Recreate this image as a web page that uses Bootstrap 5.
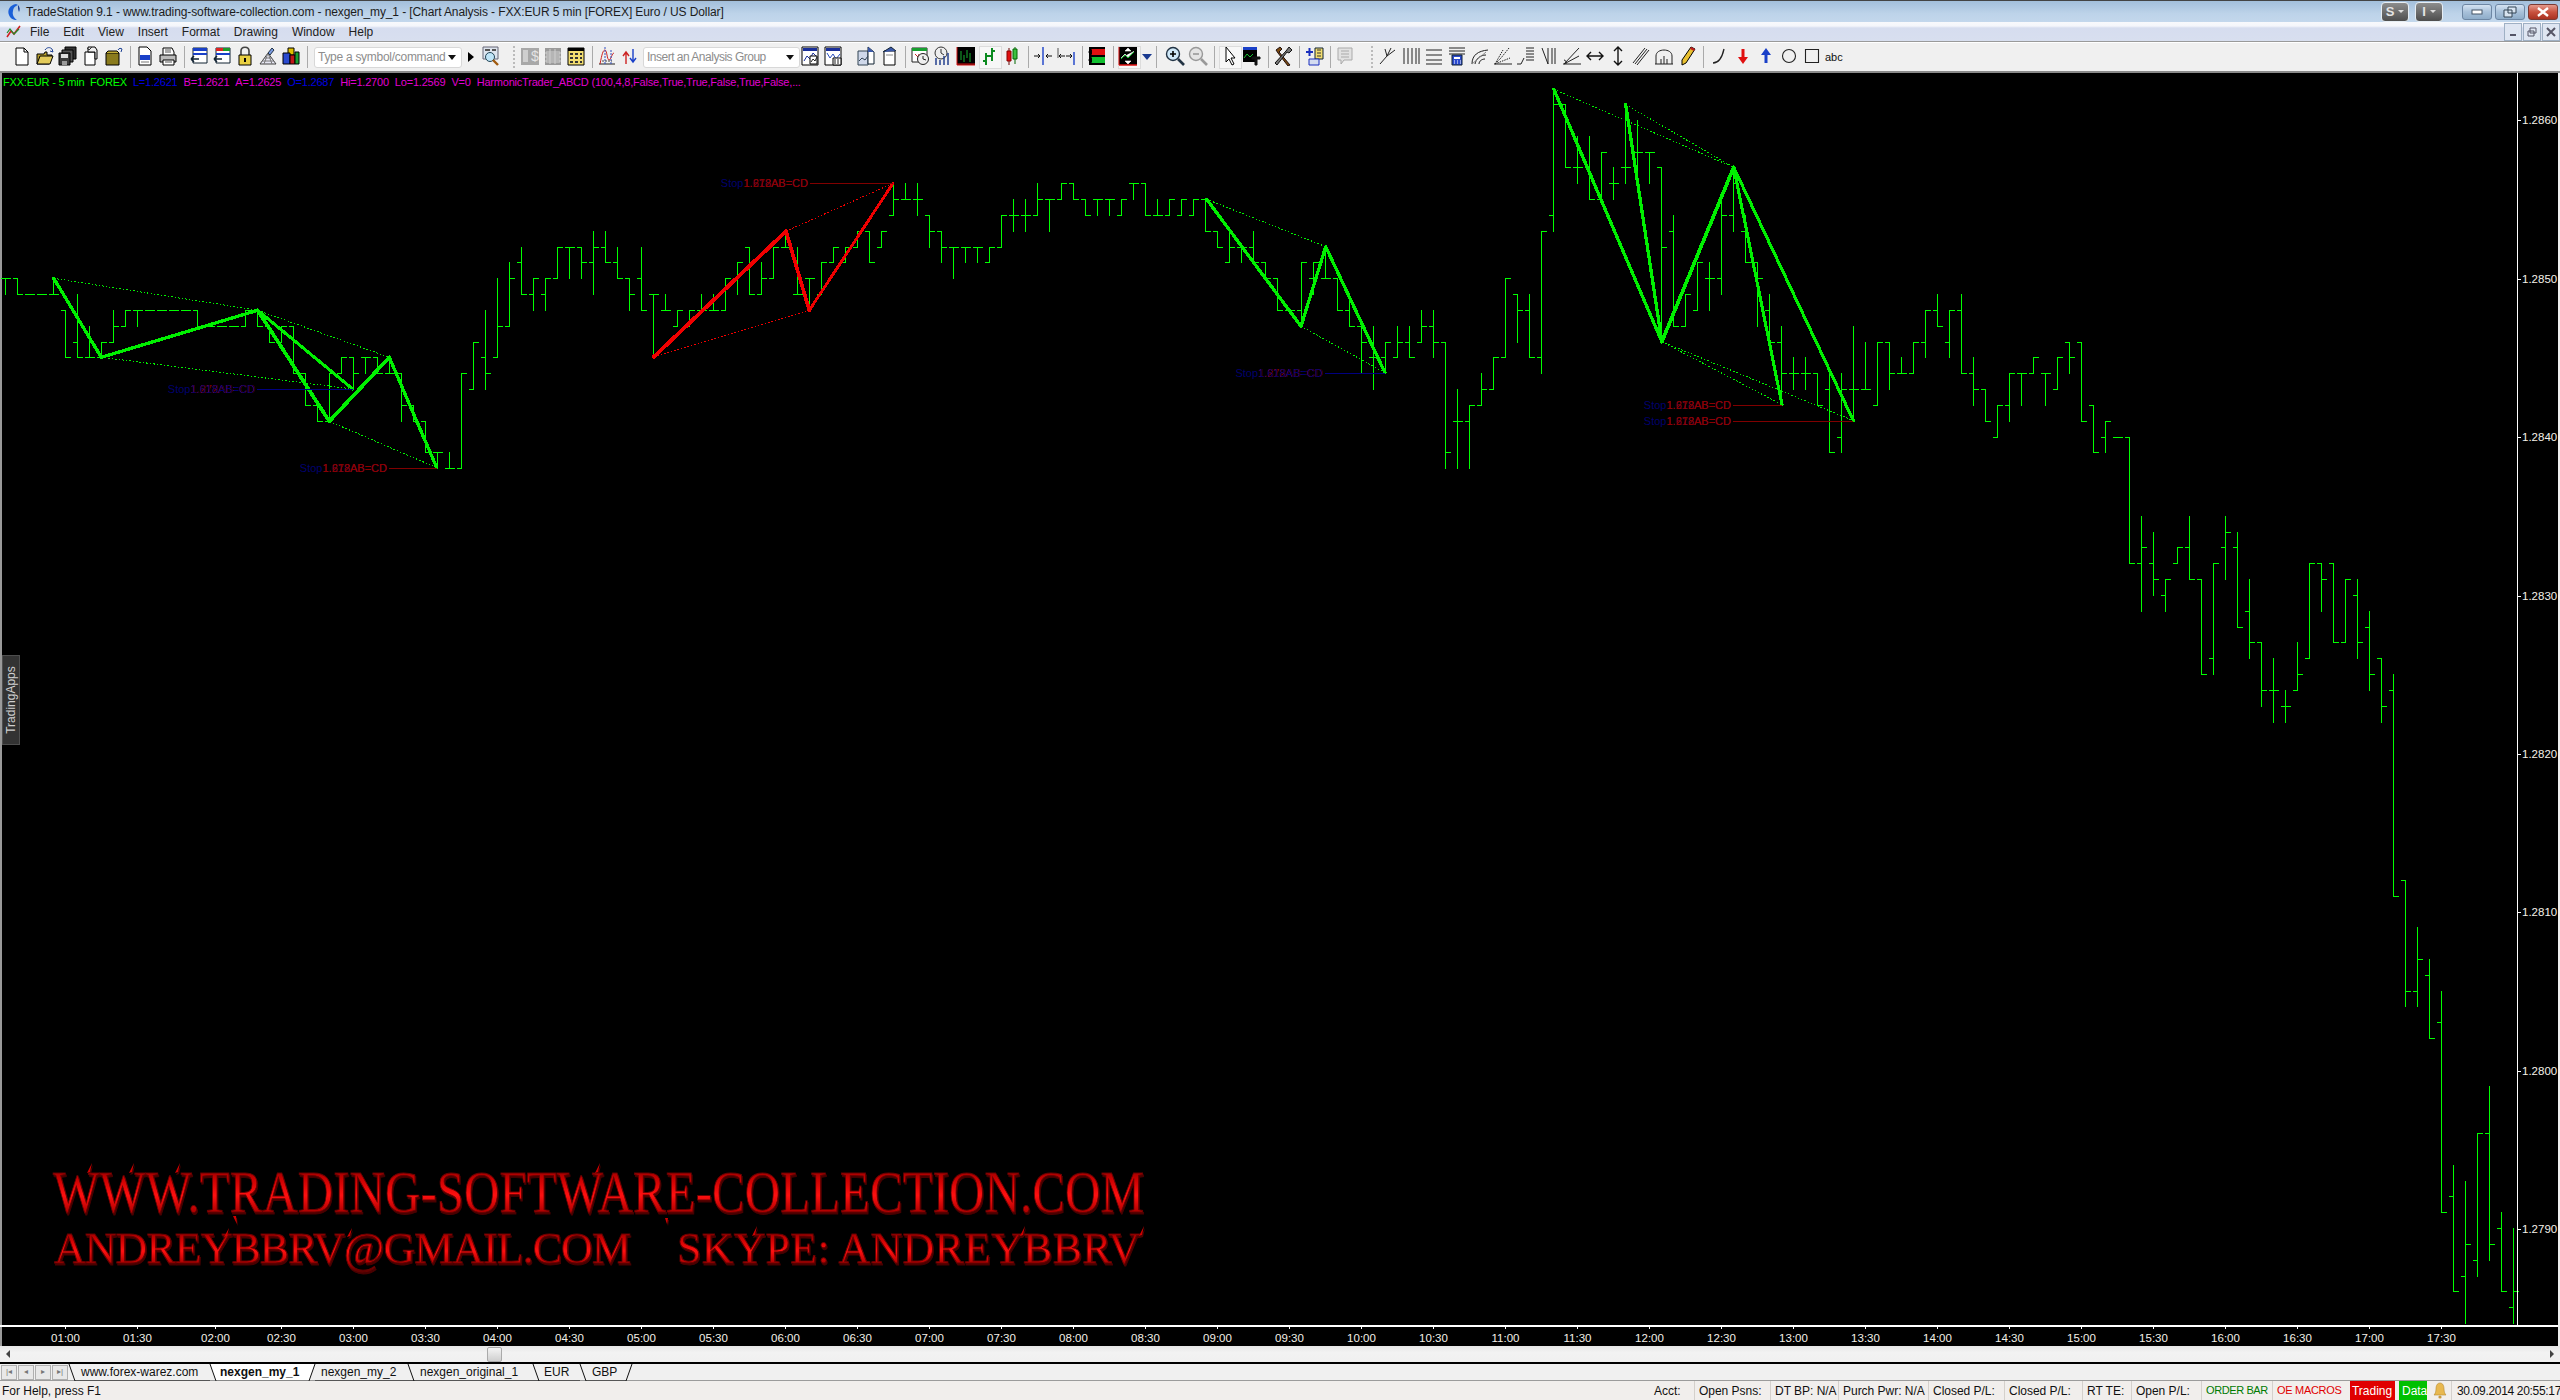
<!DOCTYPE html>
<html lang="en">
<head>
<meta charset="utf-8">
<title>TradeStation 9.1 Chart Analysis</title>
<link href="https://cdn.jsdelivr.net/npm/bootstrap@5.3.0/dist/css/bootstrap.min.css" rel="stylesheet">
<style>
html,body{height:100%;margin:0;overflow:hidden}
body{font-family:"Liberation Sans",Arial,sans-serif;font-size:12px;line-height:1;background:#000;color:#111}
.app-shell{width:2560px;height:1400px}
.title-row{height:22px;background:linear-gradient(#a3bfdb,#bdd3e9 60%,#c3d7ec);border-top:1px solid #444;padding-left:7px;gap:5px}
.title-text{color:#1c1c1c;font-size:12px;letter-spacing:-.1px}
.caption-btn{width:30px;height:16px;border:1px solid #6d86a3;border-radius:3px;background:linear-gradient(#d4e2f1,#a8c1da 50%,#8fadc9);margin-left:3px}
.caption-close{background:linear-gradient(#e49a8c,#c9523f 50%,#a93222);border-color:#7b3a33}
.caption-extra{width:28px;height:20px;border:1px solid #e6edf3;border-radius:4px;background:linear-gradient(#8d8d8d,#4e4e4e);color:#e4e4e4;font-weight:700;font-size:13px;margin-right:6px;gap:4px}
.tiny-caret{border-left:3px solid transparent;border-right:3px solid transparent;border-top:3px solid #ddd}
.cap-right{padding-right:2px}
.menu-row{height:20px;background:linear-gradient(#f8f9fc 0,#f4f6fb 4px,#d6ddef 6px,#d8dfef 100%);border-bottom:1px solid #9a9a9a;padding-left:6px;gap:14px;font-size:12px;color:#222}
.mdi-btn{width:18px;height:18px;border:1px solid #9fb0c4;background:#dfe6f2;margin-left:1px}
.tool-row{height:31px;background:#f0f0f0;border-top:1px solid #fff;border-bottom:2px solid #8b8b8b;padding-left:12px}
.tb{width:23px;height:23px;flex:none}
.tb svg{display:block;width:20px;height:20px}
.tb-on{background:#f7f7f7;box-shadow:inset 0 0 0 1px #dcdcdc}
.tb-text{font-size:11px}
.tb-sep{width:8px;height:22px;flex:none;position:relative}
.tb-sep::after{content:"";position:absolute;left:3px;top:0;bottom:0;border-left:1px solid #aaa}
.tb-grip{flex:none;height:22px;border-left:2px dotted #bbb}
.grip-a{width:0;margin:0 5px 0 9px}
.grip-b{width:0;margin:0 5px 0 13px}
.sep-wide{width:10px}
.sep-zoom{width:12px}
.gap-doc{margin-left:10px}
.combo{height:21px;border:1px solid #d8d8d8;border-radius:3px;background:#fff;color:#8d8d8d;font-size:12px;padding:0 5px 0 3px;flex:none;white-space:nowrap}
.combo-a{width:148px;margin-right:3px;letter-spacing:-.28px}
.combo-b{width:157px;letter-spacing:-.5px}
.combo i{border-left:4px solid transparent;border-right:4px solid transparent;border-top:5px solid #111}
.chart-box{flex:1 1 auto;background:#000;overflow:hidden}
.chart-svg{display:block;width:2560px;height:1273px}
.legend-line{left:3px;top:4px;font-size:11px;white-space:pre;letter-spacing:-.2px}
.lg-g{color:#0f0}.lg-b{color:#0000e0;margin-left:6px}.lg-m{color:#e000d0;margin-left:6px}
.side-tab{left:2px;top:582px;width:18px;height:90px;background:#333;border:1px solid #4e4e4e;color:#cfcfcf}
.side-tab span{display:block;transform:rotate(-90deg);white-space:nowrap;font-size:12px}
.wm-group{filter:drop-shadow(1.5px 2px 0 #4a0000)}
.scroll-row{height:17px;background:linear-gradient(#e6e6e6,#f2f2f2 40%,#f0f0f0);border-bottom:1px solid #000;padding:0 6px}
.scroll-thumb{width:15px;height:15px;margin-left:477px;border:1px solid #aaa;border-radius:2px;background:linear-gradient(#f4f4f4,#cfcfcf)}
.arr-l{border-top:4px solid transparent;border-bottom:4px solid transparent;border-right:4px solid #444}
.arr-r{border-top:4px solid transparent;border-bottom:4px solid transparent;border-left:4px solid #444;margin-left:auto}
.tabs-row{height:18px;background:#f0f0f0;border-top:1px solid #000;border-bottom:1px solid #9b9b9b;font-size:12px}
.tabs-art{left:0;top:0;width:700px;height:17px}
.nav-box{width:16px;height:15px;border:1px solid #b0b0b0;background:#e8e8e8;margin-left:1px;color:#777;font-size:8px;flex:none}
.tab-name{z-index:1;flex:none}
.tn1{margin-left:13px;width:139px}
.tn2{width:101px;font-weight:700}
.tn3{width:99px}
.tn4{width:124px}
.tn5{width:48px}
.status-row{height:19px;background:#f1eeec;font-size:12px;padding-left:2px;color:#111;letter-spacing:-.02px}
.stat{height:19px;flex:none;white-space:nowrap;border-left:1px solid #d4d0cc;padding-left:4px}
.s-a{margin-left:auto;border:0;padding:0;width:40px}
.s-b{width:76px}.s-c{width:68px}.s-d{width:90px}.s-e{width:76px}.s-f{width:78px}.s-g{width:49px}.s-h{width:70px}.s-i{width:71px}.s-j{width:75px}
.s-trade{background:#e00000;color:#fff;width:45px;margin-left:3px;border:0;padding-left:2px}
.s-data{background:#00c000;color:#fff;width:28px;margin-left:4px;border:0;padding-left:3px}
.s-bell{width:24px;border:0;padding-left:6px}
.s-time{width:109px;padding-left:5px;letter-spacing:-.32px}
.txt-green{color:#007a00;font-size:11px;letter-spacing:-.4px}
.txt-red{color:#e00000;font-size:11px;letter-spacing:-.3px}
</style>
</head>
<body>
<svg width="0" height="0" class="position-absolute">
<defs>
<symbol id="i-new" viewBox="0 0 20 20"><path d="M4 2h8l4 4v13H4z" fill="#fff" stroke="#000"/><path d="M12 2v4h4" fill="none" stroke="#000"/></symbol>
<symbol id="i-open" viewBox="0 0 20 20"><path d="M2 8h7l1-2h2v3h5l-3 9H2z" fill="#b8a02c" stroke="#000"/><path d="M5 10h13l-3 8H2z" fill="#e3cb5a" stroke="#000"/><path d="M10 4c2-3 5-3 7-1l1 3-3-1" fill="none" stroke="#1a3f94"/></symbol>
<symbol id="i-saveall" viewBox="0 0 20 20"><path d="M7 1h11v12H7z" fill="#333" stroke="#000"/><path d="M4 4h11v12H4z" fill="#555" stroke="#000"/><path d="M1 7h11v12H1z" fill="#3c3c3c" stroke="#000"/><path d="M3 8h7v4H3z" fill="#ddd"/><path d="M4 15h5v4H4z" fill="#9a9a9a"/></symbol>
<symbol id="i-clip" viewBox="0 0 20 20"><path d="M4 6h10v13H4z" fill="#fff" stroke="#000"/><path d="M7 1h7l2 3v9h-2V6H7z" fill="#eee" stroke="#000"/><path d="M6 2l2 2 3-3" fill="none" stroke="#333"/></symbol>
<symbol id="i-box" viewBox="0 0 20 20"><path d="M2 7h13v12H2z" fill="#8a7b1d" stroke="#000"/><path d="M2 7l2-2h9l2 2" fill="#c0ab35" stroke="#000"/><path d="M14 4c1-2 3-2 4-1l-1 3" fill="none" stroke="#1a3f94"/></symbol>
<symbol id="i-pgblue" viewBox="0 0 20 20"><path d="M4 1h8l4 4v14H4z" fill="#fff" stroke="#000"/><path d="M5 9h10v5H5z" fill="#1a40c8"/><path d="M6 15h8v2H6z" fill="#bbb"/></symbol>
<symbol id="i-print" viewBox="0 0 20 20"><path d="M5 2h9l2 4v4H5z" fill="#fff" stroke="#000"/><path d="M2 9h16v7H2z" fill="#bbb" stroke="#000"/><path d="M5 14h11v5H5z" fill="#fff" stroke="#000"/><path d="M7 4h6M7 6h6M7 16h7" stroke="#555"/></symbol>
<symbol id="i-winb" viewBox="0 0 20 20"><path d="M4 2h14v15H4z" fill="#fff" stroke="#123"/><path d="M4 2h14v3H4zM4 7h14v2H4z" fill="#1a40c8"/><path d="M10 13H2m0 0l3-3m-3 3l3 3" stroke="#123" fill="none" stroke-width="1.5"/></symbol>
<symbol id="i-wing" viewBox="0 0 20 20"><path d="M4 2h14v15H4z" fill="#fff" stroke="#123"/><path d="M4 2h7v3H4z" fill="#d22"/><path d="M11 2h7v3h-7z" fill="#1a9a2a"/><path d="M4 7h14v2H4z" fill="#1a40c8"/><path d="M10 13H2m0 0l3-3m-3 3l3 3" stroke="#123" fill="none" stroke-width="1.5"/></symbol>
<symbol id="i-lock" viewBox="0 0 20 20"><path d="M6 9V5c0-5 8-5 8 0v4" fill="none" stroke="#444" stroke-width="1.6"/><path d="M4 9h12v10H4z" fill="#e8cf42" stroke="#000"/><path d="M9 12h2v4H9z" fill="#000"/></symbol>
<symbol id="i-pyr" viewBox="0 0 20 20"><path d="M2 18L10 7l8 11z" fill="#e8e8f4" stroke="#444"/><path d="M6 18l4-11 4 11M4 15h12M6 12h8" stroke="#777" fill="none"/><path d="M10 7l4-5 2 2-4 5z" fill="#7a9ae0" stroke="#234"/></symbol>
<symbol id="i-blocks" viewBox="0 0 20 20"><path d="M7 2h6v7H7z" fill="#e0c000" stroke="#000"/><path d="M2 7h7v11H2z" fill="#2a4ad0" stroke="#000"/><path d="M9 9h5v9H9z" fill="#c01818" stroke="#000"/><path d="M14 6h4v12h-4z" fill="#18a030" stroke="#000"/></symbol>
<symbol id="i-search" viewBox="0 0 20 20"><path d="M2 1h15v12H2z" fill="#dde4ee" stroke="#667"/><path d="M4 3h5v2H4zM11 3h4v2h-4z" fill="#555"/><circle cx="9" cy="11" r="4.5" fill="#bfe4f7" stroke="#245"/><path d="M12 14l5 5" stroke="#a05a10" stroke-width="2.4"/></symbol>
<symbol id="i-gdollar" viewBox="0 0 20 20"><path d="M1 2h18v17H1z" fill="#a8a8a8"/><path d="M3 4h5v12H3z" fill="#cfcfcf"/><text x="11" y="15" font-size="14" fill="#e4e4e4" font-family="Liberation Sans">$</text></symbol>
<symbol id="i-gtable" viewBox="0 0 20 20"><path d="M2 2h16v17H2z" fill="#9a9a9a"/><path d="M3 6h14v2H3zM3 10h14v2H3zM3 14h14v2H3zM7 3v15M12 3v15" stroke="#d0d0d0" fill="none"/></symbol>
<symbol id="i-calc" viewBox="0 0 20 20"><path d="M2 2h16v17H2z" fill="#f2dd70" stroke="#000"/><path d="M2 2h16v3H2z" fill="#000"/><path d="M4 7h3v2H4zM9 7h3v2H9zM14 7h2v2h-2zM4 11h3v2H4zM9 11h3v2H9zM14 11h2v2h-2zM4 15h3v2H4zM9 15h3v2H9zM14 15h2v2h-2z" fill="#333"/></symbol>
<symbol id="i-signal" viewBox="0 0 20 20"><path d="M2 18h16" stroke="#222"/><path d="M3 18c2-10 3-14 5-14s2 10 4 10 3-7 5-7" fill="none" stroke="#c22"/><path d="M8 1v17M14 4v14" stroke="#3050c0" stroke-dasharray="2 1"/><path d="M5 15h10" stroke="#444" stroke-dasharray="2 1"/></symbol>
<symbol id="i-updown" viewBox="0 0 20 20"><path d="M6 18V7m-3 3l3-4 3 4" stroke="#c22" fill="none" stroke-width="1.4"/><path d="M13 3v12m-3-3l3 4 3-4" stroke="#1a40c8" fill="none" stroke-width="1.4"/></symbol>
<symbol id="i-winchart" viewBox="0 0 20 20"><path d="M2 1h16v18H2z" fill="#fff" stroke="#000"/><path d="M3 2h14v3H3z" fill="#1a2f9a"/><path d="M4 15l3-5 3 3 3-6 4 4" stroke="#1a2f9a" fill="none"/><path d="M10 10h7v8h-7z" fill="#fff" stroke="#000"/><path d="M11 16l2-3 2 2 2-4" stroke="#222" fill="none"/></symbol>
<symbol id="i-wingrid" viewBox="0 0 20 20"><path d="M2 1h16v18H2z" fill="#fff" stroke="#000"/><path d="M3 2h14v3H3z" fill="#1a2f9a"/><path d="M4 7l3 5 3-4 3 5 4-5" stroke="#2a50c0" fill="none"/><path d="M10 12h8v7h-8z" fill="#fff" stroke="#000"/><path d="M12 13v5M15 13v5" stroke="#222"/></symbol>
<symbol id="i-docup" viewBox="0 0 20 20"><path d="M5 5h11v14H5z" fill="#fff" stroke="#000"/><path d="M4 6L12 1l5 4" fill="#3a58a8" stroke="#123"/><path d="M7 9h7" stroke="#888"/></symbol>
<symbol id="i-docwin" viewBox="0 0 20 20"><path d="M2 5h10v14H2z" fill="#cfd8ea" stroke="#345"/><path d="M12 1l6 5v12h-6z" fill="#fff" stroke="#123"/><path d="M3 15l3-3 3 2 3-4" stroke="#345" fill="none"/><path d="M12 1l6 5h-6z" fill="#3a58a8"/></symbol>
<symbol id="i-calclock" viewBox="0 0 20 20"><path d="M2 2h15v14H2z" fill="#fff" stroke="#222"/><path d="M2 2h15v3H2z" fill="#18a030"/><path d="M5 8l3 3 1-3" stroke="#c22" fill="none"/><circle cx="13" cy="13" r="5.5" fill="#eee" stroke="#222"/><path d="M13 10v3l3 1" stroke="#222" fill="none"/></symbol>
<symbol id="i-clockbars" viewBox="0 0 20 20"><circle cx="8" cy="7" r="6" fill="#eee" stroke="#333"/><path d="M8 3v4l3 2" stroke="#333" fill="none"/><path d="M3 12v7M7 14v5M11 10v9M15 7v12" stroke="#25408f" stroke-width="1.5"/></symbol>
<symbol id="i-darkchart" viewBox="0 0 20 20"><path d="M1 1h18v18H1z" fill="#000"/><path d="M1 18h18M1 1v18h18" stroke="#d01010" fill="none"/><path d="M5 5v9M8 9v7M11 4v8M14 7v9" stroke="#18b030"/></symbol>
<symbol id="i-ohlc" viewBox="0 0 20 20"><path d="M7 7v12M4 15h3M7 10h3M13 2v13M10 10h3M13 5h3" stroke="#0b8a1f" stroke-width="2"/></symbol>
<symbol id="i-candles" viewBox="0 0 20 20"><path d="M7 2v17" stroke="#600"/><path d="M5 5h4v10H5z" fill="#e01010" stroke="#800"/><path d="M13 1v17" stroke="#060"/><path d="M11 3h4v10h-4z" fill="#3cc040" stroke="#060"/></symbol>
<symbol id="i-barin" viewBox="0 0 20 20"><path d="M10 1v18" stroke="#1a40c8" stroke-width="1.4"/><path d="M1 10h6m-2-2l2 2-2 2M19 10h-6m2-2l-2 2 2 2" stroke="#111" fill="none"/></symbol>
<symbol id="i-barout" viewBox="0 0 20 20"><path d="M2 2v10" stroke="#555"/><path d="M18 6v13" stroke="#1a40c8" stroke-width="1.4"/><path d="M9 10H3m2-2l-2 2 2 2M10 10h6m-2-2l2 2-2 2" stroke="#111" fill="none"/></symbol>
<symbol id="i-panel" viewBox="0 0 20 20"><path d="M2 1h16v18H2z" fill="#000"/><path d="M4 3h14v6H4z" fill="#e01010"/><path d="M4 11h14v6H4z" fill="#10c030"/><path d="M1 6l4-3v6zM1 14l4-3v6z" fill="#000"/></symbol>
<symbol id="i-pressed" viewBox="0 0 20 20"><path d="M1 1h18v18H1z" fill="#000"/><path d="M1 19h18M1 1v18h18" stroke="#e01010" fill="none"/><path d="M10 2l3 3h-6zM10 18l3-3h-6zM3 12l4-4 3 3 6-6" fill="#fff" stroke="#fff" stroke-width=".6"/><path d="M3 13l4-4 3 3 6-6" stroke="#18c030" fill="none"/></symbol>
<symbol id="i-zin" viewBox="0 0 20 20"><circle cx="8" cy="8" r="6.5" fill="#cfe8f8" stroke="#234" stroke-width="1.4"/><path d="M5 8h6M8 5v6" stroke="#000" stroke-width="1.6"/><path d="M13 13l6 6" stroke="#234" stroke-width="2.6"/></symbol>
<symbol id="i-zout" viewBox="0 0 20 20"><circle cx="8" cy="8" r="6.5" fill="#e4e4e4" stroke="#999" stroke-width="1.4"/><path d="M5 8h6" stroke="#999" stroke-width="1.6"/><path d="M13 13l6 6" stroke="#999" stroke-width="2.6"/></symbol>
<symbol id="i-cursor" viewBox="0 0 20 20"><path d="M7 1v15l3-3 3 6 2-1-3-6h4z" fill="#fff" stroke="#000"/></symbol>
<symbol id="i-chartt" viewBox="0 0 20 20"><path d="M1 1h14v15H1z" fill="#000"/><path d="M1 1h14v3H1z" fill="#1a40c8"/><path d="M2 12l3-4 3 3 3-3" stroke="#18c030" fill="none"/><path d="M10 11h8v2h-3v6h-2v-6h-3z" fill="#111" stroke="#111"/></symbol>
<symbol id="i-tools" viewBox="0 0 20 20"><path d="M3 4l4-3 2 2-3 3 11 13-2 1L5 7z" fill="#7a4a10" stroke="#211"/><path d="M16 1l3 3-3 3-2-1-10 13-2-2L13 5z" fill="#777" stroke="#111"/></symbol>
<symbol id="i-plusgrid" viewBox="0 0 20 20"><path d="M11 2h8v11h-8z" fill="#f2dd70" stroke="#123"/><path d="M13 4h4M13 7h4M13 10h4" stroke="#333"/><path d="M2 6h7M5.500 2v8" stroke="#1a2fbe" stroke-width="2"/><path d="M5 13h10v6H5z" fill="#d4dcf0" stroke="#1a2fbe"/></symbol>
<symbol id="i-note" viewBox="0 0 20 20"><path d="M3 2h14v12H9l-3 4v-4H3z" fill="#e2e2e2" stroke="#aaa"/><path d="M6 5h8M6 8h8M6 11h8" stroke="#aaa"/></symbol>
<symbol id="i-fork" viewBox="0 0 20 20"><path d="M2 18l7-8M9 10l4-8M9 10l8-6M9 10v0M9 10l-2-7" stroke="#222" fill="none"/></symbol>
<symbol id="i-vlines" viewBox="0 0 20 20"><path d="M3 2v16M7 2v16M11 2v16M15 2v16M18 2v16" stroke="#222"/></symbol>
<symbol id="i-hlines" viewBox="0 0 20 20"><path d="M2 4h16M2 9h16M2 14h16M2 18h16" stroke="#222" stroke-width="1.2"/></symbol>
<symbol id="i-calcl" viewBox="0 0 20 20"><path d="M2 2h16M2 5h16M2 8h16" stroke="#222"/><path d="M5 9h10v10H5z" fill="#2a4ad0" stroke="#123"/><path d="M7 11h6v2H7z" fill="#fff"/><path d="M7 15h1M10 15h1M13 15h1M7 17h1M10 17h1M13 17h1" stroke="#fff"/></symbol>
<symbol id="i-arcs" viewBox="0 0 20 20"><path d="M2 18C2 9 8 5 18 4M5 18c1-5 5-9 11-9M9 18c0-3 3-5 6-5" fill="none" stroke="#222"/><path d="M2 18l14-12" stroke="#888"/></symbol>
<symbol id="i-fan" viewBox="0 0 20 20"><path d="M1 18h18" stroke="#222"/><path d="M2 18l6-6 8-10M2 18l15-6M2 18l8-14" stroke="#222" stroke-dasharray="1.500 1" fill="none"/></symbol>
<symbol id="i-stair" viewBox="0 0 20 20"><path d="M1 18h4l3-6" stroke="#222" fill="none"/><path d="M10 2h8M10 5h8M10 8h8M10 11h8M10 14h8" stroke="#222" stroke-width="1.2"/></symbol>
<symbol id="i-lines2" viewBox="0 0 20 20"><path d="M3 2l6 16V2M13 2v16M16 2v16" stroke="#222" fill="none"/></symbol>
<symbol id="i-angle" viewBox="0 0 20 20"><path d="M1 18h18M2 18L17 2M4 18c0-2 0-4-2-4M2 18l15-8" stroke="#222" fill="none"/></symbol>
<symbol id="i-hh" viewBox="0 0 20 20"><path d="M2 10h16M6 6l-4 4 4 4M14 6l4 4-4 4" stroke="#111" stroke-width="1.4" fill="none"/></symbol>
<symbol id="i-vv" viewBox="0 0 20 20"><path d="M10 1v18M6 5l4-4 4 4M6 15l4 4 4-4" stroke="#111" stroke-width="1.4" fill="none"/></symbol>
<symbol id="i-diag" viewBox="0 0 20 20"><path d="M2 17L14 2M6 19L18 4M4 18L16 3" stroke="#222" fill="none"/></symbol>
<symbol id="i-dome" viewBox="0 0 20 20"><path d="M2 18V10C2 2 18 2 18 10v8M7 18v-5M13 18v-5M10 10v8" fill="none" stroke="#222"/><path d="M1 18h18" stroke="#222"/></symbol>
<symbol id="i-pencil" viewBox="0 0 20 20"><path d="M14 1l4 2-9 14-4 2 0-5z" fill="#e8c030" stroke="#000"/><path d="M14 1l4 2-1 2-4-2z" fill="#c02020"/></symbol>
<symbol id="i-curve" viewBox="0 0 20 20"><path d="M3 17C9 17 12 12 14 3" fill="none" stroke="#222" stroke-width="1.3"/></symbol>
<symbol id="i-red" viewBox="0 0 20 20"><path d="M8.500 3h3v8H15l-5 7-5-7h3.500z" fill="#e01010"/></symbol>
<symbol id="i-blue" viewBox="0 0 20 20"><path d="M8.500 17h3V9H15l-5-7-5 7h3.500z" fill="#1a40c8"/></symbol>
<symbol id="i-circ" viewBox="0 0 20 20"><circle cx="10" cy="10" r="6.500" fill="none" stroke="#222" stroke-width="1.1"/></symbol>
<symbol id="i-sq" viewBox="0 0 20 20"><path d="M3.500 3.500h13v13h-13z" fill="none" stroke="#222" stroke-width="1.1"/></symbol>
</defs>
</svg>

<div class="app-shell d-flex flex-column">
  <div class="title-row d-flex align-items-center flex-none">
    <svg width="14" height="18" viewBox="0 0 14 18"><path d="M9 1C3 2 0 7 2 12c1 3 4 5 8 5-3-2-5-5-4-9 0-3 2-5 5-6z" fill="#1a5fd8"/><path d="M11 2c2 2 2 5 1 7-1-2-1-5-1-7z" fill="#0a2f90"/></svg>
    <span class="title-text">TradeStation 9.1 - www.trading-software-collection.com - nexgen_my_1 - [Chart Analysis - FXX:EUR 5 min [FOREX] Euro / US Dollar]</span>
    <div class="ms-auto d-flex align-items-center cap-right">
      <div class="caption-extra d-flex align-items-center justify-content-center">S<span class="tiny-caret"></span></div>
      <div class="caption-extra d-flex align-items-center justify-content-center me-3">I<span class="tiny-caret"></span></div>
      <div class="caption-btn d-flex align-items-center justify-content-center"><svg width="12" height="6"><rect x="1" y="1" width="10" height="4" fill="#fff" stroke="#456"/></svg></div>
      <div class="caption-btn d-flex align-items-center justify-content-center"><svg width="14" height="12"><path d="M5 1h8v6H5zM1 4h8v7H1z" fill="#d8e4f0" stroke="#345"/></svg></div>
      <div class="caption-btn caption-close d-flex align-items-center justify-content-center"><svg width="14" height="10"><path d="M2 1l10 8M12 1L2 9" stroke="#fff" stroke-width="2.400"/></svg></div>
    </div>
  </div>
  <div class="menu-row d-flex align-items-center">
    <div class="d-flex align-items-center gap-2">
      <svg width="16" height="14" viewBox="0 0 16 14"><path d="M1 12l4-6 3 3 6-8" fill="none" stroke="#d02020" stroke-width="1.600"/><path d="M1 8l3-4 4 5 5-5" fill="none" stroke="#228a2a" stroke-width="1.200"/></svg>
      <span>File</span>
    </div>
    <span>Edit</span><span>View</span><span>Insert</span><span>Format</span><span>Drawing</span><span>Window</span><span>Help</span>
    <div class="ms-auto d-flex">
      <div class="mdi-btn d-flex align-items-center justify-content-center"><svg width="10" height="10"><path d="M2 8h6" stroke="#556" stroke-width="2"/></svg></div>
      <div class="mdi-btn d-flex align-items-center justify-content-center"><svg width="12" height="12"><path d="M4 2h6v5H4zM2 5h6v5H2z" fill="#dfe6f2" stroke="#556"/></svg></div>
      <div class="mdi-btn d-flex align-items-center justify-content-center"><svg width="12" height="12"><path d="M2 2l8 8M10 2l-8 8" stroke="#556" stroke-width="2"/></svg></div>
    </div>
  </div>
  <div class="tool-row d-flex align-items-center">
    <div class="tb"><svg><use href="#i-new"/></svg></div>
    <div class="tb"><svg><use href="#i-open"/></svg></div>
    <div class="tb"><svg><use href="#i-saveall"/></svg></div>
    <div class="tb"><svg><use href="#i-clip"/></svg></div>
    <div class="tb"><svg><use href="#i-box"/></svg></div>
    <div class="tb-sep"></div>
    <div class="tb"><svg><use href="#i-pgblue"/></svg></div>
    <div class="tb"><svg><use href="#i-print"/></svg></div>
    <div class="tb-sep"></div>
    <div class="tb"><svg><use href="#i-winb"/></svg></div>
    <div class="tb"><svg><use href="#i-wing"/></svg></div>
    <div class="tb"><svg><use href="#i-lock"/></svg></div>
    <div class="tb"><svg><use href="#i-pyr"/></svg></div>
    <div class="tb"><svg><use href="#i-blocks"/></svg></div>
    <div class="tb-sep sep-wide"></div>
    <div class="combo combo-a d-flex align-items-center justify-content-between">Type a symbol/command<i></i></div>
    <svg width="12" height="12" viewBox="0 0 12 12"><path d="M3 1l6 5-6 5z" fill="#000"/></svg>
    <div class="tb ms-1"><svg><use href="#i-search"/></svg></div>
    <div class="tb-grip grip-a"></div>
    <div class="tb"><svg><use href="#i-gdollar"/></svg></div>
    <div class="tb"><svg><use href="#i-gtable"/></svg></div>
    <div class="tb"><svg><use href="#i-calc"/></svg></div>
    <div class="tb-sep"></div>
    <div class="tb"><svg><use href="#i-signal"/></svg></div>
    <div class="tb"><svg><use href="#i-updown"/></svg></div>
    <div class="combo combo-b d-flex align-items-center justify-content-between">Insert an Analysis Group<i></i></div>
    <div class="tb"><svg><use href="#i-winchart"/></svg></div>
    <div class="tb"><svg><use href="#i-wingrid"/></svg></div>
    <div class="tb gap-doc"><svg><use href="#i-docwin"/></svg></div>
    <div class="tb"><svg><use href="#i-docup"/></svg></div>
    <div class="tb-sep"></div>
    <div class="tb"><svg><use href="#i-calclock"/></svg></div>
    <div class="tb"><svg><use href="#i-clockbars"/></svg></div>
    <div class="tb"><svg><use href="#i-darkchart"/></svg></div>
    <div class="tb tb-on"><svg><use href="#i-ohlc"/></svg></div>
    <div class="tb"><svg><use href="#i-candles"/></svg></div>
    <div class="tb-sep"></div>
    <div class="tb"><svg><use href="#i-barin"/></svg></div>
    <div class="tb"><svg><use href="#i-barout"/></svg></div>
    <div class="tb-sep"></div>
    <div class="tb"><svg><use href="#i-panel"/></svg></div>
    <div class="tb-sep"></div>
    <div class="tb tb-on"><svg><use href="#i-pressed"/></svg></div>
    <svg width="12" height="12" viewBox="0 0 12 12"><path d="M1 3h10L6 9z" fill="#1a3a90"/></svg>
    <div class="tb-sep sep-zoom"></div>
    <div class="tb"><svg><use href="#i-zin"/></svg></div>
    <div class="tb"><svg><use href="#i-zout"/></svg></div>
    <div class="tb-sep"></div>
    <div class="tb tb-on"><svg><use href="#i-cursor"/></svg></div>
    <div class="tb"><svg><use href="#i-chartt"/></svg></div>
    <div class="tb-sep"></div>
    <div class="tb"><svg><use href="#i-tools"/></svg></div>
    <div class="tb-sep"></div>
    <div class="tb"><svg><use href="#i-plusgrid"/></svg></div>
    <div class="tb-sep"></div>
    <div class="tb"><svg><use href="#i-note"/></svg></div>
    <div class="tb-grip grip-b"></div>
    <div class="tb"><svg><use href="#i-fork"/></svg></div>
    <div class="tb"><svg><use href="#i-vlines"/></svg></div>
    <div class="tb"><svg><use href="#i-hlines"/></svg></div>
    <div class="tb"><svg><use href="#i-calcl"/></svg></div>
    <div class="tb"><svg><use href="#i-arcs"/></svg></div>
    <div class="tb"><svg><use href="#i-fan"/></svg></div>
    <div class="tb"><svg><use href="#i-stair"/></svg></div>
    <div class="tb"><svg><use href="#i-lines2"/></svg></div>
    <div class="tb"><svg><use href="#i-angle"/></svg></div>
    <div class="tb"><svg><use href="#i-hh"/></svg></div>
    <div class="tb"><svg><use href="#i-vv"/></svg></div>
    <div class="tb"><svg><use href="#i-diag"/></svg></div>
    <div class="tb"><svg><use href="#i-dome"/></svg></div>
    <div class="tb"><svg><use href="#i-pencil"/></svg></div>
    <div class="tb-sep sep-wide"></div>
    <div class="tb"><svg><use href="#i-curve"/></svg></div>
    <div class="tb"><svg><use href="#i-red"/></svg></div>
    <div class="tb"><svg><use href="#i-blue"/></svg></div>
    <div class="tb"><svg><use href="#i-circ"/></svg></div>
    <div class="tb"><svg><use href="#i-sq"/></svg></div>
    <div class="tb tb-text d-flex align-items-center">abc</div>
  </div>

  <div class="chart-box position-relative">
    <svg id="chart" class="chart-svg" viewBox="0 73 2560 1273" xmlns="http://www.w3.org/2000/svg">
      <defs>
        <linearGradient id="redfill" x1="0" y1="0" x2="0" y2="1">
          <stop offset="0" stop-color="#5a0000"/><stop offset=".3" stop-color="#c80000"/><stop offset=".55" stop-color="#ff1010"/><stop offset=".8" stop-color="#b00000"/><stop offset="1" stop-color="#4a0000"/>
        </linearGradient>
      </defs>
      <rect x="0" y="73" width="2" height="1273" fill="#9a9a9a"/>
      <rect x="2558" y="73" width="2" height="1273" fill="#eee"/>
      <path id="bars" fill="none" stroke="#00ff00" stroke-width="1" shape-rendering="crispEdges"/>
      <g id="patterns"></g>
      <path d="M2517.500 73V1326M0 1326H2558" stroke="#fff" stroke-width="1.500" fill="none" shape-rendering="crispEdges"/>
      <g id="axes" fill="#f4f0e8" font-family="Liberation Sans" font-size="11.500"></g>
      <g id="wm" class="wm-group" font-family="Liberation Serif" fill="url(#redfill)" stroke="#6a0000" stroke-width=".9">
        <text x="53" y="1212" font-size="60" textLength="1091" lengthAdjust="spacingAndGlyphs">WWW.TRADING-SOFTWARE-COLLECTION.COM</text>
        <text x="54" y="1263" font-size="44" textLength="577" lengthAdjust="spacing">ANDREYBBRV@GMAIL.COM</text>
        <text x="677" y="1263" font-size="44" textLength="463" lengthAdjust="spacing">SKYPE: ANDREYBBRV</text>
        <path d="M92 1163l-5 10 3-1zM134 1163l-5 10 3-1zM180 1163l-5 10 3-1zM600 1163l-5 10 3-1zM229 1228l-5 9 3-1zM352 1228l-5 9 3-1zM757 1226l-5 10 3-1zM1025 1226l-5 10 3-1zM1144 1226l-5 10 3-1zM233 1216l4 8-1-8zM665 1218l2 6 1-6z" stroke="none" fill="#d00000"/>
      </g>
    </svg>
    <div class="legend-line position-absolute"><span class="lg-g">FXX:EUR - 5 min  FOREX</span><span class="lg-b">L=1.2621</span><span class="lg-m">B=1.2621</span><span class="lg-m">A=1.2625</span><span class="lg-b">O=1.2687</span><span class="lg-m">Hi=1.2700</span><span class="lg-m">Lo=1.2569</span><span class="lg-m">V=0</span><span class="lg-m">HarmonicTrader_ABCD (100,4,8,False,True,True,False,True,False,...</span></div>
    <div class="side-tab position-absolute d-flex align-items-center justify-content-center"><span>TradingApps</span></div>
  </div>

  <div class="scroll-row d-flex align-items-center"><i class="arr-l"></i><div class="scroll-thumb"></div><i class="arr-r"></i></div>
  <div class="tabs-row d-flex align-items-center position-relative">
    <svg class="tabs-art position-absolute" viewBox="0 0 700 17">
      <path d="M210 0H315L309 17H216Z" fill="#fff"/>
      <path d="M69 0L75 17M210 0L216 17L309 17L315 0M408 0L414 17M533 0L539 17M580 0L586 17L626 17L632 0M75 17H210M315 17H580" stroke="#111" fill="none"/>
    </svg>
    <div class="nav-box d-flex align-items-center justify-content-center position-relative">|◂</div>
    <div class="nav-box d-flex align-items-center justify-content-center position-relative">◂</div>
    <div class="nav-box d-flex align-items-center justify-content-center position-relative">▸</div>
    <div class="nav-box d-flex align-items-center justify-content-center position-relative">▸|</div>
    <span class="tab-name tn1">www.forex-warez.com</span>
    <span class="tab-name tn2">nexgen_my_1</span>
    <span class="tab-name tn3">nexgen_my_2</span>
    <span class="tab-name tn4">nexgen_original_1</span>
    <span class="tab-name tn5">EUR</span>
    <span class="tab-name">GBP</span>
  </div>
  <div class="status-row d-flex align-items-center">
    <span>For Help, press F1</span>
    <span class="stat s-a d-flex align-items-center">Acct:</span>
    <span class="stat s-b d-flex align-items-center">Open Psns:</span>
    <span class="stat s-c d-flex align-items-center">DT BP: N/A</span>
    <span class="stat s-d d-flex align-items-center">Purch Pwr: N/A</span>
    <span class="stat s-e d-flex align-items-center">Closed P/L:</span>
    <span class="stat s-f d-flex align-items-center">Closed P/L:</span>
    <span class="stat s-g d-flex align-items-center">RT TE:</span>
    <span class="stat s-h d-flex align-items-center">Open P/L:</span>
    <span class="stat s-i d-flex align-items-center txt-green">ORDER BAR</span>
    <span class="stat s-j d-flex align-items-center txt-red">OE MACROS</span>
    <span class="stat s-trade d-flex align-items-center">Trading</span>
    <span class="stat s-data d-flex align-items-center">Data</span>
    <span class="stat s-bell d-flex align-items-center"><svg width="14" height="17" viewBox="0 0 14 17"><path d="M7 1c3 0 4 3 4 6s1 5 2 6H1c1-1 2-3 2-6s1-6 4-6z" fill="#e8b850" stroke="#b58a30" stroke-width=".6"/><circle cx="7" cy="15" r="1.600" fill="#c89a40"/></svg></span>
    <span class="stat s-time d-flex align-items-center">30.09.2014 20:55:17</span>
  </div>
</div>

<script>
/* [hi, lo, open, close] in ticks below 1.2860; 1 tick = 15.83px */
var D=[[10,11,10,10],[10,11,10,11],[11,11,11,11],[11,11,11,11],[10,11,11,11],[12,15,12,15],[11,15,14,15],[13,15,15,15],[14,15,15,14],[12,14,14,13],[12,13,13,12],[12,13,12,12],[12,12,12,12],[12,12,12,12],[12,12,12,12],[12,12,12,12],[12,13,12,13],[13,13,13,13],[13,13,13,13],[13,13,13,13],[12,13,13,12],[12,13,12,13],[13,14,13,14],[13,14,14,13],[13,16,13,16],[16,18,16,18],[18,19,18,19],[16,19,19,16],[15,16,16,15],[15,17,15,16],[15,16,15,15],[15,16,15,16],[15,16,16,16],[16,19,16,18],[18,19,18,19],[19,21,19,21],[21,22,21,21],[21,22,22,22],[16,22,22,16],[14,17,17,14],[12,17,15,16],[10,15,15,13],
[9,13,13,10],[8,11,9,11],[10,12,11,10],[10,12,11,10],[8,10,10,8],[8,10,8,8],[8,10,8,9],[7,11,9,8],[7,9,8,9],[8,10,9,10],[10,12,10,11],[8,12,10,12],[11,15,11,11],[11,12,12,12],[12,13,13,12],[12,13,13,12],[11,12,12,12],[11,12,12,12],[10,12,12,10],[9,11,10,9],[8,11,8,11],[9,11,11,10],[8,10,10,8],[7,8,8,8],[8,11,11,11],[10,12,10,10],[9,11,11,9],[8,9,9,8],[8,9,9,8],[7,8,8,7],[7,9,7,9],[7,8,8,7],[4,6,6,5],[4,5,5,5],[4,6,5,5],[6,8,6,7],[7,9,7,8],[8,10,8,8],[8,9,8,8],[8,9,8,8],[8,9,9,8],[6,8,8,6],[5,7,6,6],[5,7,6,6],[4,6,6,5],[5,7,5,5],[4,5,5,4],[4,5,4,5],[5,6,5,6],[5,6,5,5],[5,6,5,5],[5,6,6,5],[4,5,4,4],[4,6,4,6],[5,6,6,6],[5,6,6,5],[5,6,6,5],[5,6,6,5],[5,7,5,7],[7,8,7,8],[7,9,9,8],[8,9,8,8],
[7,9,8,9],[9,10,9,10],[10,12,10,12],[12,12,12,12],[9,13,12,9],[9,11,10,9],[8,10,10,10],[10,12,10,12],[11,13,12,13],[13,16,13,14],[13,17,15,15],[14,16,15,14],[13,15,15,14],[13,15,14,15],[12,14,14,13],[12,15,13,14],[14,22,14,21],[17,22,19,19],[18,22,19,18],[16,18,18,17],[15,17,17,15],[10,15,15,10],[11,14,11,12],[11,15,12,15],[7,16,15,7],[-2,7,6,-1],[-1,3,-1,3],[1,4,3,3],[1,5,3,5],[2,5,5,2],[3,5,4,4],[-1,4,3,3],[0,4,2,2],[2,4,2,2],[3,14,3,8],[6,13,7,13],[11,13,13,11],[9,12,12,9],[9,12,10,10],[5,11,10,6],[3,7,6,4],[6,9,7,9],[9,13,9,10],[11,14,12,14],[13,18,14,16],[15,17,16,16],[15,17,16,16],[16,18,16,18],[16,21,17,21],[16,21,20,17],[13,19,17,17],[14,17,17,17],[14,18,18,14],[14,17,14,16],[15,16,16,16],[14,16,16,14],[12,15,14,12],[11,13,12,13],
[12,15,14,12],[11,16,12,16],[15,18,16,17],[17,19,17,19],[18,20,20,18],[16,19,18,16],[16,18,16,16],[15,16,16,15],[16,18,16,16],[15,17,17,15],[14,16,14,15],[14,19,14,19],[18,21,18,21],[19,21,20,19],[20,20,20,20],[20,28,20,28],[25,31,28,27],[26,30,28,29],[29,31,30,29],[27,28,28,27],[25,29,27,29],[29,35,29,35],[28,35,34,28],[25,29,27,26],[26,32,27,32],[29,34,31,33],[33,37,33,36],[34,38,36,36],[36,38,37,37],[33,36,36,35],[28,34,34,28],[28,31,28,29],[28,33,28,33],[29,33,33,29],[29,34,30,33],[31,36,32,35],[34,38,34,37],[35,49,36,49],
[48,56,48,55],[51,56,55,53],[53,58,54,58],[55,69,57,69],[66,74,68,74],[67,76,73,71],[64,73,72,64],[61,72,64,71],[69,74,70,74],[70,76,75,74]];
function yk(k){return Math.round(120+15.83*k)+.5}
var p="";
D.forEach(function(b,i){
  var x=5.5+12*i,h=yk(b[0]),l=yk(b[1]),o=yk(b[2]),c=yk(b[3]);
  p+="M"+x+" "+(h-.5)+"V"+(l+.5)+"M"+(x-5)+" "+o+"H"+x+"M"+x+" "+c+"H"+(x+5);
});
document.getElementById("bars").setAttribute("d",p);

var NS="http://www.w3.org/2000/svg";
function el(parent,tag,attrs,text){var e=document.createElementNS(NS,tag);for(var a in attrs)e.setAttribute(a,attrs[a]);if(text)e.textContent=text;parent.appendChild(e);return e}
var G=document.getElementById("patterns"),GR="#00f000",RD="#f00000";
function thick(c,w,pts){el(G,"line",{x1:pts[0],y1:pts[1],x2:pts[2],y2:pts[3],stroke:c,"stroke-width":w+.7,"stroke-linecap":"round","shape-rendering":"crispEdges"})}
function dot(c,pts){el(G,"line",{x1:pts[0],y1:pts[1],x2:pts[2],y2:pts[3],stroke:c,"stroke-width":1,"stroke-dasharray":"1.500 2","shape-rendering":"crispEdges"})}
function label(endX,y,lineEnd,lineCol,navyTop){
  el(G,"line",{x1:endX+2,y1:y+.5,x2:lineEnd,y2:y+.5,stroke:lineCol,"stroke-width":1,"shape-rendering":"crispEdges"});
  var a={x:endX,y:y+4,"text-anchor":"end","font-family":"Liberation Sans","font-size":11};
  function t(c,s){var o=Object.assign({fill:c},a);el(G,"text",o,s)}
  if(navyTop){t("#800000","1.618AB=CD");t("#800000","1.272AB=CD");t("#00006e","Stop1.618AB=CD")}
  else{t("#00006e","Stop1.618AB=CD");t("#8a0000","1.272AB=CD");t("#8a0000","1.618AB=CD")}
}
/* pattern 1 */
dot(GR,[53.7,278.3,257.7,310.3]);dot(GR,[257.7,310.3,389.3,357.3]);dot(GR,[101.3,357.3,352.7,389]);dot(GR,[329.3,421.3,436.7,467.7]);
thick(GR,2.6,[53.7,278.3,101.3,357.3]);thick(GR,2.6,[101.3,357.3,257.7,310.3]);thick(GR,3,[257.7,310.3,329.3,421.3]);thick(GR,2.4,[257.7,310.3,352.7,389]);thick(GR,3,[329.3,421.3,389.3,357.3]);thick(GR,2.6,[389.3,357.3,436.7,467.7]);
label(255,388.5,353,"#000080",true);label(387,467.5,437,"#800000",false);
/* pattern 2 */
dot(RD,[654,356.7,809.3,310.3]);dot(RD,[786,231.3,893,183.3]);
thick(RD,3.2,[654,356.7,786,231.3]);thick(RD,3,[786,231.3,809.3,310.3]);thick(RD,2.2,[809.3,310.3,893,183.3]);
label(808,182.5,893,"#800000",false);
/* pattern 3 */
dot(GR,[1206.7,199.3,1325.7,246.7]);dot(GR,[1301,326.3,1385,372.7]);
thick(GR,2.6,[1206.7,199.3,1301,326.3]);thick(GR,2.6,[1301,326.3,1325.7,246.7]);thick(GR,2.6,[1325.7,246.7,1385,372.7]);
label(1322.6,372.5,1385,"#000080",true);
/* pattern 4 */
dot(GR,[1553.8,89.3,1733.7,167.3]);dot(GR,[1625.7,104.7,1733.7,167.3]);dot(GR,[1661.9,341.7,1853.4,420.7]);dot(GR,[1661.9,341.7,1782,404.7]);
thick(GR,2.6,[1553.8,89.3,1661.9,341.7]);thick(GR,2.6,[1625.7,104.7,1661.9,341.7]);thick(GR,3,[1661.9,341.7,1733.7,167.3]);thick(GR,2.4,[1733.7,167.3,1782,404.7]);thick(GR,2.4,[1733.7,167.3,1853.4,420.7]);
label(1731,404.5,1782,"#800000",false);label(1731,420.5,1853,"#800000",false);

/* axes */
var A=document.getElementById("axes");
var P=[["1.2860",120],["1.2850",279],["1.2840",437],["1.2830",596],["1.2820",754],["1.2810",912],["1.2800",1071],["1.2790",1229]];
P.forEach(function(q){el(A,"text",{x:2522,y:q[1]+4},q[0]);el(A,"line",{x1:2518,y1:q[1]+.5,x2:2521,y2:q[1]+.5,stroke:"#fff"})});
var T=[["01:00",65.5],["01:30",137.5],["02:00",215.5],["02:30",281.5],["03:00",353.5],["03:30",425.5],["04:00",497.5],["04:30",569.5]];
var hh=5,mm=0,tx=641.5;
while(tx<2450){T.push([(hh<10?"0":"")+hh+":"+(mm?"30":"00"),tx]);tx+=72;if(mm){hh++;mm=0}else{mm=1}}
T.forEach(function(q){el(A,"text",{x:q[1],y:1342,"text-anchor":"middle"},q[0]);el(A,"line",{x1:q[1],y1:1326,x2:q[1],y2:1329,stroke:"#fff"})});
</script>
</body>
</html>
